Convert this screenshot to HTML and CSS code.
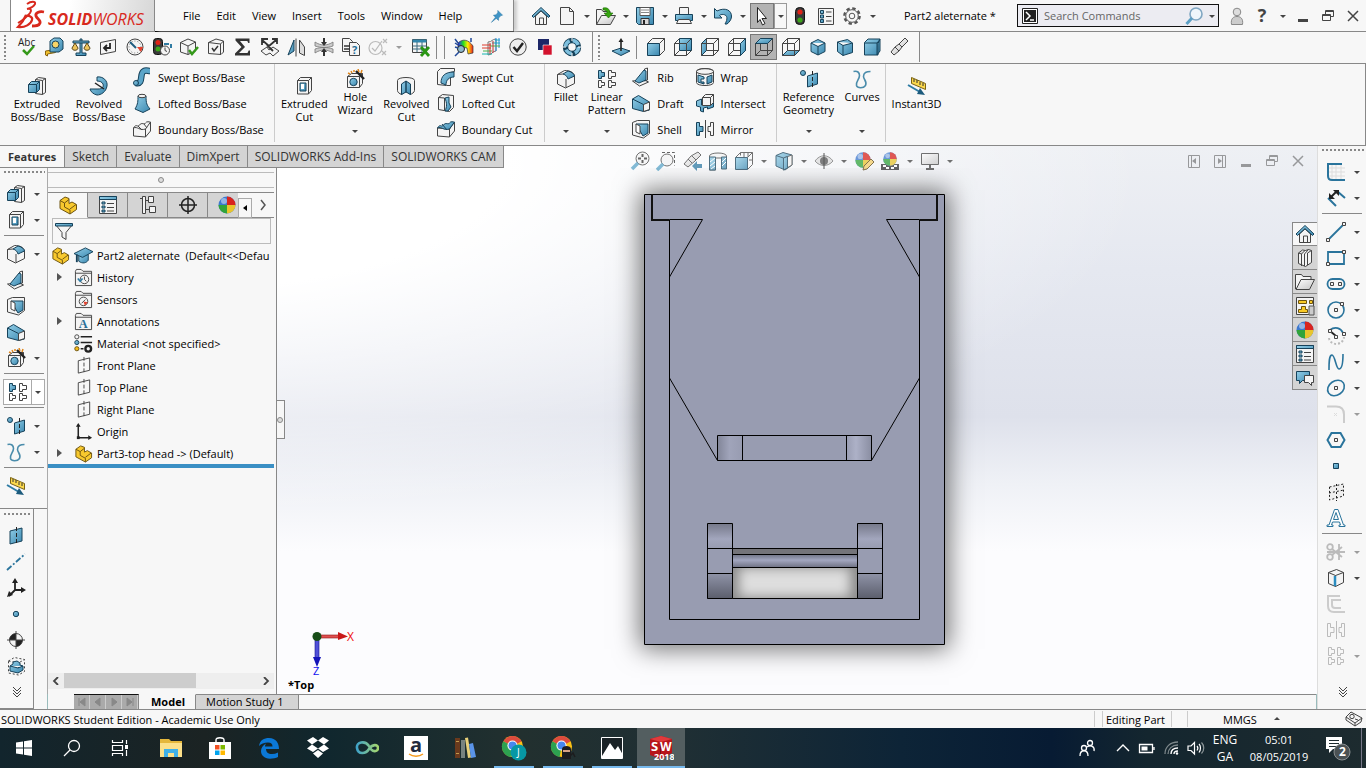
FILE: index.html
```html
<!DOCTYPE html>
<html lang="en">
<head>
    <meta charset="UTF-8">
    <meta name="viewport" content="width=device-width, initial-scale=1.0">
    <title>Part2 aleternate</title>
    <link rel="stylesheet" href="styles.css">
</head>
<body>
    <!-- icon sprite -->
    <svg class="sprite" aria-hidden="true">
        <defs>
            <linearGradient id="gBlue" x1="0" y1="0" x2="1" y2="1"><stop offset="0" stop-color="#93cfe8"/><stop offset="1" stop-color="#3a87af"/></linearGradient>
            <linearGradient id="gGrey" x1="0" y1="0" x2="1" y2="1"><stop offset="0" stop-color="#fff"/><stop offset="1" stop-color="#c4c4c4"/></linearGradient>
            <linearGradient id="gLoop" x1="0" y1="0" x2="1" y2="0"><stop offset="0" stop-color="#3fa3c8"/><stop offset="1" stop-color="#a5d66f"/></linearGradient>
            <linearGradient id="gRain" x1="0" y1="0" x2="1" y2="0"><stop offset="0" stop-color="#22f"/><stop offset=".35" stop-color="#2d2"/><stop offset=".65" stop-color="#fe0"/><stop offset="1" stop-color="#e22"/></linearGradient>
        </defs>
        <symbol id="drop" viewBox="0 0 8 8"><path d="M1 3h6L4 6z" fill="#444"/></symbol>
        <symbol id="more" viewBox="0 0 20 20"><path class="k" d="M6 5l4 4 4-4M6 8l4 4 4-4M6 11l4 4 4-4"/></symbol>
        <symbol id="home" viewBox="0 0 20 20"><path class="w" d="M4.5 10v8.500h11V10L10 5z"/><path class="k" d="M8.500 18v-6h4v6"/><path class="b" d="M1 10l9-8.500L19 10l-1.500 1.500L10 4.500 2.500 11.500z"/></symbol>
        <symbol id="new" viewBox="0 0 20 20"><path class="w" d="M3.500 1.500h9l4 4v13h-13z"/><path class="k" d="M12.500 1.500v4h4"/></symbol>
        <symbol id="open" viewBox="0 0 20 20"><path class="w" d="M.5 18.500v-15h5l1.500 2h7v4"/><path fill="url(#gGrey)" stroke="#444" d="M.5 18.500l5-9h14l-5 9z"/><path d="M7 2c4-1 7 1 7 5h3l-4.500 5L8 7h3c0-2-1-3-4-3z" fill="#36a50f" stroke="#1d6a05" stroke-width=".6"/></symbol>
        <symbol id="save" viewBox="0 0 20 20"><path class="b" d="M1.500 1.500h17v17h-15l-2-2z"/><path fill="#fff" stroke="#555" d="M5 1.500h10v8H5z"/><path d="M6 4h8M6 6.500h8" stroke="#888"/><path fill="#d8d8d8" stroke="#333" d="M6 12.500h8v6H6z"/><path fill="#222" d="M8 14h2v4H8z"/></symbol>
        <symbol id="print" viewBox="0 0 20 20"><path class="w" d="M5.500 1.500h9v7h-9z"/><path class="b" d="M1.500 8.500h17v6h-17z"/><path class="w" d="M4.500 13.500h11l2 4h-15z"/></symbol>
        <symbol id="undo" viewBox="0 0 20 20"><path class="b" d="M1.500 2.500l2.500 2.500c8-4 15-1 14.500 6-.5 3-2 5-4.500 7h-2c3-5 2.500-9-1.500-9.500-2-.2-3 .2-4 1l2.500 2.500h-7.500z"/></symbol>
        <symbol id="cursor" viewBox="0 0 20 20"><path fill="#fff" stroke="#222" d="M5.500 1.500l9 11h-4.500l3 5-2.500 1.500-2.500-5.500-2.500 3z"/></symbol>
        <symbol id="traffic" viewBox="0 0 20 20"><rect x="5.500" y="1.500" width="9" height="17" rx="4" fill="#3a3a3a" stroke="#111"/><circle cx="10" cy="6" r="2.600" fill="#e02418"/><circle cx="10" cy="14" r="2.600" fill="#3da51b"/></symbol>
        <symbol id="list" viewBox="0 0 20 20"><path class="w" d="M2.500 2.500h15v16h-15z"/><path class="b" d="M4.500 4.500h3v3h-3zM4.500 9h3v3h-3zM4.500 13.500h3v3h-3z"/><path class="k" d="M10 6h5.500M10 10.500h5.500M10 15h5.500"/></symbol>
        <symbol id="gear" viewBox="0 0 20 20"><circle cx="10" cy="10" r="7.600" fill="none" stroke="#555" stroke-width="2.400" stroke-dasharray="3.400 2.570"/><circle cx="10" cy="10" r="6.300" fill="#f7f7f7" stroke="#555"/><circle cx="10" cy="10" r="2.800" fill="none" stroke="#555"/></symbol>
        <symbol id="pin" viewBox="0 0 20 20"><path d="M11 3l6 6-2 .5-3 3v3l-3-2.500L3 18l5-6.500L5.500 9l3.500-.5 2-3z" fill="#3f94c6" stroke="#2673a3" stroke-width=".6"/></symbol>
        <symbol id="terminal" viewBox="0 0 20 20"><path fill="#fff" stroke="#222" d="M2.500 2.500h15v15h-15z"/><path fill="#222" d="M4 4h12v12H4z"/><path d="M6 6l4 4-4 4M10 14h4" fill="none" stroke="#fff" stroke-width="1.500"/></symbol>
        <symbol id="magnify" viewBox="0 0 20 20"><circle cx="12" cy="8" r="6" fill="#eef6fb" stroke="#7fa6c2" stroke-width="1.600"/><path d="M8 12l-5.500 6" stroke="#5b9fc4" stroke-width="3"/></symbol>
        <symbol id="user" viewBox="0 0 20 20"><circle cx="10" cy="6" r="3.800" fill="#ddd" stroke="#888"/><path d="M4.500 18.500c-1-6 2-8 5.500-8s6.500 2 5.500 8z" fill="#ccc" stroke="#888"/></symbol>
        <symbol id="min" viewBox="0 0 20 20"><path d="M5 13h10v3H5z" fill="#444"/></symbol>
        <symbol id="restore" viewBox="0 0 20 20"><path class="k" d="M7.500 8V4.500h8v6h-3M4.500 8.500h8v6h-8zM7 5.500h9M4 9.500h9"/></symbol>
        <symbol id="close" viewBox="0 0 20 20"><path d="M5 5l10 10M15 5L5 15" fill="none" stroke="#444" stroke-width="1.500"/></symbol>

        <symbol id="spell" viewBox="0 0 20 20"><path d="M6 13l4 4 7-8" fill="none" stroke="#35991a" stroke-width="2.500"/></symbol>
        <symbol id="tape" viewBox="0 0 20 20"><path fill="#f2c12e" stroke="#8a6410" d="M1.500 14l10-1.500v3l-8 1.500v2l-2-1z"/><path class="b" d="M6 4l4-3h6l3 3v8l-4 3H6z"/><circle cx="11.500" cy="7.500" r="3.500" fill="#f7d467" stroke="#17425a"/></symbol>
        <symbol id="scale" viewBox="0 0 20 20"><path class="b" d="M9 2h2v14h4v2.500H5V16h4z"/><path class="b" d="M2 4h16v2H2z"/><path d="M1 11l3-5 3 5c0 3-6 3-6 0zM13 11l3-5 3 5c0 3-6 3-6 0z" fill="#eec45c" stroke="#5b481b"/></symbol>
        <symbol id="section" viewBox="0 0 20 20"><path class="w" d="M2.500 5.500l15-3v12l-15 3z"/><path d="M12 6v5H7m2-3l-3 3 3 3" fill="none" stroke="#222" stroke-width="1.800"/></symbol>
        <symbol id="gauge" viewBox="0 0 20 20"><circle cx="10" cy="10" r="8" class="w"/><circle cx="10" cy="10" r="6" fill="none" stroke="#777" stroke-dasharray="1 2"/><path d="M12 10h6l-2 5z" fill="#e3422e"/><path d="M5 5l6 6" stroke="#1f5d80" stroke-width="2"/></symbol>
        <symbol id="trafficclock" viewBox="0 0 20 20"><rect x="1.500" y="1.500" width="9" height="16" rx="3" fill="#3a3a3a" stroke="#111"/><circle cx="6" cy="5.500" r="2.500" fill="#e02418"/><circle cx="6" cy="12" r="2.500" fill="#3da51b"/><circle cx="13" cy="13.500" r="4.500" class="w"/><path class="k" d="M13 10.500v3l2 1"/><path d="M12 7h5M19 7v4" fill="none" stroke="#2f7ba3" stroke-width="2"/></symbol>
        <symbol id="cubecheck" viewBox="0 0 20 20"><path class="w" d="M1.500 5.500L9 2l7.500 3v9L9 17.500 1.500 15zM1.500 5.500L9 9l7.500-4M9 9v8.500"/><path d="M10 13l3 4 6-7" fill="none" stroke="#35991a" stroke-width="2.500"/></symbol>
        <symbol id="cubetick" viewBox="0 0 20 20"><path class="w" d="M2.500 5.500L10 2l7.500 2v11L15 17.500l-12.500-1zM2.500 5.500l12 1.500 3-3M14.500 7v10"/><path d="M6 11l2 3 4-5" fill="none" stroke="#333" stroke-width="1.500"/></symbol>
        <symbol id="sigma" viewBox="0 0 20 20"><path d="M2.500 1.500h14v4.500h-1.200l-1-2H7l5 6-6 6h8.500l1.200-2.500h1.300v5h-15v-2l6.500-6.500-6-6.500z" fill="#333"/></symbol>
        <symbol id="mates" viewBox="0 0 20 20"><path class="w" d="M1 14l6-4 2 3 4-3 6 4-6 5-3-3-4 2z"/><path d="M2 3l7 6 7-6M12 2h5v5M2 8V2h6M7 8l6 6" fill="none" stroke="#333" stroke-width="1.800"/></symbol>
        <symbol id="mirrorview" viewBox="0 0 20 20"><path class="b" d="M1 18L7 3v11z"/><path d="M9 1.500v18M12.500 3v13l5 2.500V10z" fill="#ddd" stroke="#444"/></symbol>
        <symbol id="thickness" viewBox="0 0 20 20"><path d="M1 5c6 4 12 4 18 0v4c-6 2-12 2-18 0zM1 16c6-4 12-4 18 0v-4c-6-2-12-2-18 0z" fill="#ccc" stroke="#777" stroke-width=".8"/><path d="M10 1v6M10 19v-6" stroke="#333" stroke-width="2"/><path d="M7 5l3 4 3-4zM7 15l3-4 3 4z" fill="#333"/></symbol>
        <symbol id="compare" viewBox="0 0 20 20"><path class="w" d="M1.500 1.500h7l3 3v10h-10z"/><path class="w" d="M8.500 5.500h7l3 3v10h-10z"/><path d="M3 9h6m-6 3h6" stroke="#333" stroke-width="1.500"/></symbol>
        <symbol id="offcheck" viewBox="0 0 20 20"><g fill="none" stroke="#bbb" stroke-width="1.200"><circle cx="7.500" cy="11" r="6.500"/><path d="M4 11l3 3 7-10M15 2l4 4m0-4l-4 4m-1 8l4 4m0-4l-4 4"/></g></symbol>
        <symbol id="excel" viewBox="0 0 20 20"><path class="w" d="M1.500 2.500h14v13h-14z"/><path fill="#3186ad" d="M1.500 2.500h14v3h-14z"/><path d="M1.500 9h14M1.500 12h14M6 5v10M11 5v10" stroke="#3b6a80"/><path d="M10 10l8 9M18 10l-8 9" stroke="#2a9614" stroke-width="2.800"/></symbol>
        <symbol id="curvature" viewBox="0 0 20 20"><path d="M4 6c5-5 11-3 15 3v7l-5 1-1-6-5-1-4 2z" fill="url(#gRain)" stroke="#333" stroke-width=".7"/><circle cx="7" cy="12" r="3.500" fill="#8fb9cc" stroke="#222"/><path d="M5 15l-4 4M1 2l3 4M1 6l3 2M1 10l3 1M17 1v4" stroke="#224a9a" stroke-width="1.500"/></symbol>
        <symbol id="zebra" viewBox="0 0 20 20"><path d="M7 5c4 0 4-3 8-3v12c-4 0-4 4-8 4z" fill="#eee" stroke="#777"/><path d="M1 8h9M1 11h9" stroke="#dd3b2b"/><path d="M14 3h5M1 17h10M11 6h8" stroke="#12b5b0"/><path d="M18 1v10M15 1v13" stroke="#2a8de0"/><path d="M2 14h9M9 9h10" stroke="#4bb24b"/><path d="M12 4v12M9 6v11" stroke="#c33"/></symbol>
        <symbol id="roundcheck" viewBox="0 0 20 20"><circle cx="10" cy="10" r="8.200" fill="#eee" stroke="#444"/><path d="M5.500 10l3.500 4 6-8" fill="none" stroke="#222" stroke-width="2.400"/></symbol>
        <symbol id="overlap" viewBox="0 0 20 20"><path d="M3 2h11v11H3z" fill="#1d2667"/><path d="M8 8h9v10H8z" fill="#d3122d" stroke="#f7f7f7" stroke-width=".6"/></symbol>
        <symbol id="ring" viewBox="0 0 20 20"><circle cx="10" cy="10" r="6.500" fill="none" stroke="#17425a" stroke-width="5.500"/><circle cx="10" cy="10" r="6.500" fill="none" stroke="#7fc0de" stroke-width="3.500" stroke-dasharray="7 3.200"/><path d="M10 0v4M0 10h4M10 20v-4M20 10h-4" stroke="#fff"/></symbol>
        <symbol id="normal" viewBox="0 0 20 20"><path class="b" d="M1 14l9-3 9 3-9 4.500z"/><path d="M10 14V3" stroke="#222" stroke-width="1.600"/><path d="M7.500 5L10 1l2.500 4z" fill="#222"/></symbol>
        <symbol id="vfront" viewBox="0 0 20 20"><path class="w" d="M1.500 6.500l5-5h12v12l-5 5z"/><path class="b" d="M1.500 6.500h12v12h-12z"/><path class="k" d="M13.500 6.500l5-5"/></symbol>
        <symbol id="vback" viewBox="0 0 20 20"><path class="b" d="M6.500 1.500h12v12h-12z"/><path class="k" d="M1.500 6.500h12v12h-12zM1.500 6.500l5-5M13.500 6.500l5-5M13.500 18.500l5-5M1.500 18.500l5-5"/></symbol>
        <symbol id="vleft" viewBox="0 0 20 20"><path class="b" d="M1.500 6.500l5-5v12l-5 5z"/><path class="k" d="M1.500 6.500h12v12h-12zM6.500 1.500h12v12h-12zM13.500 6.500l5-5M13.500 18.500l5-5"/></symbol>
        <symbol id="vright" viewBox="0 0 20 20"><path class="k" d="M1.500 6.500h12v12h-12zM6.500 1.500h12v12h-12zM1.500 6.500l5-5M1.500 18.500l5-5"/><path class="b" d="M13.500 6.500l5-5v12l-5 5z"/></symbol>
        <symbol id="vtop" viewBox="0 0 20 20"><path class="k" d="M1.500 6.500h12v12h-12zM6.500 1.500h12v12h-12zM13.500 18.500l5-5M1.500 18.500l5-5"/><path class="b" d="M1.500 6.500l5-5h12l-5 5z"/></symbol>
        <symbol id="vbottom" viewBox="0 0 20 20"><path class="b" d="M1.500 18.500l5-5h12l-5 5z"/><path class="k" d="M1.500 6.500h12v12h-12zM6.500 1.500h12v12h-12zM1.500 6.500l5-5M13.500 6.500l5-5"/></symbol>
        <symbol id="viso" viewBox="0 0 20 20"><path class="b" d="M3 6l7-3.500L17 6v8.500L10 18l-7-3.500zM3 6l7 3.500L17 6M10 9.500V18"/></symbol>
        <symbol id="vtri" viewBox="0 0 20 20"><path class="b" d="M2.500 5l10-2.500L17.500 6v9.500L8 18.500l-5.500-4zM2.500 5L8 8.500 17.500 6M8 8.500v10"/></symbol>
        <symbol id="vdim" viewBox="0 0 20 20"><path class="b" d="M2.500 5.500L6 2h12l-2 4.500V18h-13.500zM2.500 6h12.500L18 2.500V14l-3 4V6"/></symbol>
        <symbol id="scope" viewBox="0 0 20 20"><path fill="url(#gGrey)" stroke="#444" d="M16 1l3 3-6 6-3 4-5 4-3-3 4-5 4-3z"/><path class="k" d="M6 10l4 4M10 7l3 3"/></symbol>

        <symbol id="extrude" viewBox="0 0 20 20"><path class="w" d="M8.500 3.500l3-2 7 1v14l-3 2-7-1zM15.500 4.500l3-2M15.500 4.500v14M8.500 3.500l7 1"/><path class="b" d="M1.500 8.500l3-3h8v8l-3 3h-8zM1.500 8.500h8v8M9.500 8.500l3-3"/></symbol>
        <symbol id="revolve" viewBox="0 0 20 20"><path class="b" d="M8 1c6-1 11 4 10 9-1 6-6 9-10 9-4-1-6-3-7-6h8c4 0 6-2 5-5-1-2-3-3-6-3z"/><path d="M6 7l9 6" stroke="#222" stroke-width="1.500"/></symbol>
        <symbol id="sweep" viewBox="0 0 20 20"><path d="M4 16c8 2 3-10 8-12 2-1 4 0 6 0" fill="none" stroke="#17425a" stroke-width="6.500"/><path d="M4 16c8 2 3-10 8-12 2-1 4 0 6 0" fill="none" stroke="#5ba5c9" stroke-width="4.500"/><circle cx="4" cy="16" r="2.500" class="b"/></symbol>
        <symbol id="loft" viewBox="0 0 20 20"><path class="b" d="M6 3h8c0 8 1 9 4 13l-7 3.500L3 16c3-5 3-8 3-13z"/><ellipse cx="10" cy="3" rx="4" ry="1.700" class="w"/></symbol>
        <symbol id="boundary" viewBox="0 0 20 20"><path class="w" d="M1.500 9c3-5 4 0 6-3s5 0 6-2 4-1 5-1v9l-5 6-12-1z"/><path class="k" d="M1.500 9c4-2 6 3 12 1l5-7M6 7l4 4M12 5l3 4M13.500 10v8"/></symbol>
        <symbol id="bcut" viewBox="0 0 20 20"><path class="w" d="M1.500 9l12 1 5-7v9l-5 6-12-1z"/><path class="b" d="M1.500 9c3-5 4 0 6-3s5 0 6-2 4-1 5-1l-5 7c-6 2-8-3-12-1zM6 5l5 6"/><path class="k" d="M13.500 10v8"/></symbol>
        <symbol id="excut" viewBox="0 0 20 20"><path class="w" d="M3.500 4.500l3-3h11v13l-3 3.500h-11zM3.500 4.500h11V18M14.500 4.500l3-3"/><path class="b" d="M6 7h6v8H6z"/><path fill="#fff" d="M7 8h3v5H7z"/></symbol>
        <symbol id="wizard" viewBox="0 0 20 20"><path class="w" d="M2.500 7.500l4-3h11v10l-3 4h-12zM2.500 7.500h12v11M14.500 7.500l3-3"/><circle cx="8.500" cy="13" r="3.700" class="b"/><path d="M11 2l8 8" stroke="#222" stroke-width="2.400"/><path d="M6 2l1 2M9 1v2M13 0l1 3M3 4l2 1M17 1l-1 3" stroke="#e0861b" stroke-width="1.500"/></symbol>
        <symbol id="recut" viewBox="0 0 20 20"><path class="w" d="M1.500 4.500c0-4 17-4 17 0v10c0 2-3 3.500-4 4l-4.500-3-4.500 3c-2-1-4-2-4-4z"/><path class="b" d="M5.500 8L10 5v11l-4.500 2.500zM14.500 8L10 5v11l4.500 2.500z"/></symbol>
        <symbol id="swcut" viewBox="0 0 20 20"><path class="w" d="M1.500 4.500l3-3h14v3l-4 1v13h-4l-9-1z"/><path class="b" d="M5 16c0-7 4-11 13-11v5c-5 0-8 3-8 8z"/></symbol>
        <symbol id="locut" viewBox="0 0 20 20"><path class="w" d="M2.500 4.500l4-3 11 1v12l-4 4-11-2zM2.500 4.500l6 .5v12"/><path class="b" d="M9 5l4-1v6l2 4-3 4H9c2-4 2-8 0-13z"/></symbol>
        <symbol id="fillet" viewBox="0 0 20 20"><path class="w" d="M1.500 5.500l7-4c6 0 9 2 10 5v8l-9 4.500-8-4z"/><path class="b" d="M7 5l5-3c4 1 6 3 6.500 5L12 10c-1-3-2-4-5-5z"/><path class="k" d="M1.500 5.500L7 5M10 10v8.500"/></symbol>
        <symbol id="pattern" viewBox="0 0 20 20"><path class="b" d="M1.500 1.500h3v2h3v4h-3v2h-3z"/><path class="k" d="M11.500 1.500h3v2h4v4h-4v2h-3zM1.500 11.500h3v2h3v3h-3v2h-3zM11.500 11.500h3v2h4v3h-4v2h-3z"/></symbol>
        <symbol id="rib" viewBox="0 0 20 20"><path class="w" d="M13.500 2l3-1v12l-3 1zM1.500 14l12-1 4 2-9 4z"/><path class="b" d="M4 14L13 3l2 1v9l-7 3z"/></symbol>
        <symbol id="draft" viewBox="0 0 20 20"><path class="b" d="M1.500 6l6-3.500 11 6.500v8l-6 1.500-11-3z"/><path class="w" d="M12.500 11.500l6-2.500v7.500l-6 2z"/><path d="M1.500 6l11 5.500" stroke="#17425a"/></symbol>
        <symbol id="shell" viewBox="0 0 20 20"><path class="w" d="M1.500 3.500l5-2h12v13l-6 4.500-11-3z"/><path class="b" d="M5 5h12v9l-5 3z"/><path fill="#fff" stroke="#444" d="M5 5l4 2v8l-4-2z"/></symbol>
        <symbol id="wrap" viewBox="0 0 20 20"><path class="w" d="M1.500 4.500c0-4 17-4 17 0v11c0 4-17 4-17 0z"/><ellipse cx="10" cy="4.500" rx="8.500" ry="2.800" class="w"/><path class="b" d="M3 8l6 2v2H6v3h3v2l-6-2zM12 10l5-2v7l-5 2z"/></symbol>
        <symbol id="intersect" viewBox="0 0 20 20"><path class="b" d="M1.500 8l5-2v6l12-3v5l-6 2v-2l-4 1v4l-3-1v-4l-4-1z"/><path class="w" d="M7.500 4.500l3-3h8v8l-3 3h-8zM7.500 4.500h8v8M15.500 4.500l3-3"/></symbol>
        <symbol id="mirror" viewBox="0 0 20 20"><path class="b" d="M1.500 3.500h3v4h3.500v5H4.500v4h-3z"/><path class="k" d="M10.500 1v18M18.500 3.500h-3v4H13v5h2.500v4h3z"/></symbol>
        <symbol id="refgeo" viewBox="0 0 20 20"><circle cx="4" cy="4" r="2.500" class="b"/><path class="b" d="M8.500 7l10-3v11l-10 3z"/><path d="M13.500 2v17" stroke="#222" stroke-dasharray="4 2"/></symbol>
        <symbol id="curves" viewBox="0 0 20 20"><path d="M1.500 2.500c4-1 6 1 6 4 0 4-4 6-3 10 1 3 7 3 9 0 2-4-2-6-2-9 0-4 3-5 7-5" fill="none" stroke="#4a8cab" stroke-width="1.600"/></symbol>
        <symbol id="instant" viewBox="0 0 20 20"><path fill="#fbd84c" stroke="#7a6315" d="M4.500 1.500l14 6v6l-14-6z"/><path d="M7 3v3M10 4v3M13 6v3M16 7v3" stroke="#333"/><path d="M1 9l12 7" stroke="#2e7ba4" stroke-width="2"/><path d="M13 12l5 7-8-1z" fill="#1d5b7d"/></symbol>

        <symbol id="zoomfit" viewBox="0 0 20 20"><circle cx="12.500" cy="7.500" r="6.500" class="w"/><path d="M8 12l-6 6" stroke="#5ba5c9" stroke-width="3.500"/><path d="M12.500 3v3m0 3v3m-4.500-4.500h3m3 0h3" stroke="#333" stroke-width="2"/></symbol>
        <symbol id="zoomarea" viewBox="0 0 20 20"><path d="M6 1.500h12.500v13" fill="none" stroke="#333" stroke-dasharray="3 2"/><circle cx="11" cy="9" r="6" class="w"/><path d="M7 13l-6 6" stroke="#5ba5c9" stroke-width="3.500"/></symbol>
        <symbol id="prev" viewBox="0 0 20 20"><path fill="url(#gGrey)" stroke="#444" d="M16 1l3 3-6 6-7 6-4-3 7-8zM6 8l4 4M10 5l4 4"/><path d="M10 15l5-5v3h5v4h-5v3z" fill="#2f7ba3"/></symbol>
        <symbol id="sectionview" viewBox="0 0 20 20"><path class="w" d="M1.500 5c0-4 17-4 17 0v12h-4V7h-7v12h-6z"/><path class="b" d="M1.500 6h6v13h-6zM13.500 6h5v12h-5z"/><path d="M2 11l5-4M2 15l5-4M3 18l4-3M14 11l4-4M14 15l4-4" stroke="#fff"/></symbol>
        <symbol id="orient" viewBox="0 0 20 20"><path class="k" d="M6.500 1.500h12v12M6.500 4.500v-3M10 1v5M14 1v5M15 9h4M1.500 6.500l5-5M13.500 6.500l5-5M13.500 18.500l5-5"/><path class="b" d="M1.500 6.500h12v12h-12z"/></symbol>
        <symbol id="display" viewBox="0 0 20 20"><path class="b" d="M2 4.500l7-3 9 2.500v10l-7 5-9-4z"/><path class="w" d="M9.500 7l8.500-3v10l-8.500 5z"/><path class="b" d="M9.500 7l4-1.500v11.500l-4 2z"/><path d="M2 4.500L9.500 7" stroke="#17425a"/></symbol>
        <symbol id="eye" viewBox="0 0 20 20"><path d="M1 10c5-7 13-7 18 0-5 6-13 6-18 0z" fill="#ddd" stroke="#777"/><circle cx="10" cy="10" r="4" fill="#555"/><path d="M10 2v16" stroke="#222"/></symbol>
        <symbol id="ball" viewBox="0 0 20 20"><circle cx="10" cy="10" r="8.500" fill="#3d79cf"/><path d="M10 10V1.500a8.500 8.500 0 018.500 8.500z" fill="#d9241e"/><path d="M10 10h8.500A8.500 8.500 0 0110 18.500z" fill="#e9c52c"/><path d="M10 10v8.500A8.500 8.500 0 011.500 10z" fill="#31a43a"/><circle cx="7" cy="6" r="3" fill="#fff" opacity=".45"/></symbol>
        <symbol id="ballpen" viewBox="0 0 20 20"><use href="#ball" width="18" height="18"/><path d="M17 8l3 3-7 7-4 1 1-4z" fill="#f5cf69" stroke="#5c4716"/></symbol>
        <symbol id="ballscene" viewBox="0 0 20 20"><path d="M1 13h18v6H1z" fill="#333"/><path d="M3 14h3v2H3zM14 14h3v2h-3zM6 16h3v2H6zM11 16h3v2h-3z" fill="#fff"/><use href="#ball" x="2" width="16" height="16"/></symbol>
        <symbol id="monitor" viewBox="0 0 20 20"><path fill="url(#gGrey)" stroke="#444" d="M1.500 2.500h17v11h-17z"/><path d="M9 14h2v3h3v2H6v-2h3z" fill="#444"/></symbol>
        <symbol id="dockl" viewBox="0 0 20 20"><path class="k" d="M4.500 4.500h11v12h-11zM7.500 4v12"/><path d="M12 7v6l-4-3z" fill="#444"/></symbol>
        <symbol id="dockr" viewBox="0 0 20 20"><path class="k" d="M4.500 4.500h11v12h-11zM12.500 4v12"/><path d="M8 7v6l4-3z" fill="#444"/></symbol>

        <symbol id="plane" viewBox="0 0 20 20"><path class="k" d="M4.500 5l12-3v13l-12 3z"/><path class="k" d="M10.500 1v18" stroke-dasharray="4 2"/></symbol>
        <symbol id="bplane" viewBox="0 0 20 20"><path class="b" d="M4 5l12-3v13L4 18z"/><path d="M10.500 1v18" stroke="#222" stroke-dasharray="4 2"/></symbol>
        <symbol id="axis" viewBox="0 0 20 20"><path d="M1 18L19 2" stroke="#2a749c" stroke-width="1.800" stroke-dasharray="6 2 2 2"/></symbol>
        <symbol id="csys" viewBox="0 0 20 20"><path d="M9 3v9h8M9 12l-6 6" fill="none" stroke="#222" stroke-width="1.800"/><path d="M6 5l3-5 3 5zM15 9l5 3-5 3zM1 19l2-6 4 4z" fill="#222"/></symbol>
        <symbol id="point" viewBox="0 0 20 20"><circle cx="10" cy="10" r="2.700" class="b"/></symbol>
        <symbol id="com" viewBox="0 0 20 20"><circle cx="10" cy="10" r="6.500" class="w"/><path d="M10 10V3.500A6.500 6.500 0 003.500 10zM10 10v6.500a6.500 6.500 0 006.500-6.500z" fill="#222"/><path class="k" d="M10 1v18M1 10h18"/></symbol>
        <symbol id="bbox" viewBox="0 0 20 20"><path class="k" stroke-dasharray="2 2" d="M2.500 5l6-3.500 10 2v12l-6 3.500-10-2zM2.500 5l10 2 6-3.500M12.500 7v12"/><path class="b" d="M4 10l3-2V6l4-1 3 2v2l3 1v4l-5 3-8-2zM4 10l8 2 5-2"/></symbol>
        <symbol id="part" viewBox="0 0 20 20"><path d="M2 5.500l5-3.500 4 1.500v5l3-1.500 4.500 2.500v5L12 19 2 13.500z" fill="#f8c92e" stroke="#6e5410"/><path d="M2 5.500L6.500 8v4l5.500 3M6.500 8L11 4.500M12 15v4M12 14l6-4.500" fill="none" stroke="#6e5410"/></symbol>
        <symbol id="cap" viewBox="0 0 20 20"><path class="b" d="M5 10v6c4 3 8 2 10-1V9z"/><path class="b" d="M0 8l12-6 8 4-11 6z"/><path d="M3 9v8" stroke="#17425a" stroke-width="2"/></symbol>
        <symbol id="folder" viewBox="0 0 20 20"><path class="w" d="M1.500 18.500V3.500l1-2h5l2 2h9v15zM1.500 5.500h17"/></symbol>
        <symbol id="history" viewBox="0 0 20 20"><use href="#folder" width="20" height="20"/><circle cx="11" cy="12" r="4.500" class="w"/><path class="k" d="M11 9v3l2 2"/><path d="M4 11l2.500 3L9 11" fill="none" stroke="#2f7ba3" stroke-width="1.700"/></symbol>
        <symbol id="sensor" viewBox="0 0 20 20"><use href="#folder" width="20" height="20"/><circle cx="10" cy="12" r="4.500" class="w"/><path d="M10 12l4.500 1-3 3.500z" fill="#e3422e"/><path class="k" d="M8 14l4-4"/></symbol>
        <symbol id="material" viewBox="0 0 20 20"><circle cx="3" cy="3" r="2.200" class="w"/><circle cx="3" cy="9" r="2.200" class="b"/><circle cx="3" cy="15.500" r="2.200" fill="#f3bb1c" stroke="#6e5410"/><path d="M7 3h12M7 9h12M7 15.500h3" stroke="#222" stroke-width="1.600"/><circle cx="15" cy="15.500" r="3" fill="none" stroke="#222" stroke-width="2.500"/></symbol>
        <symbol id="origin" viewBox="0 0 20 20"><path d="M4.500 3v13.500H17" fill="none" stroke="#222" stroke-width="1.600"/><path d="M2 5l2.500-4L7 5zM15 14l4 2.500-4 2.500z" fill="#222"/><path d="M3 15h3v3H3z" fill="#222"/></symbol>
        <symbol id="props" viewBox="0 0 20 20"><path class="w" d="M1.500 1.500h17v17h-17z"/><path class="b" d="M1.500 1.500h17v3h-17zM4 7h3v2H4zM4 11h3v2H4zM4 15h3v2H4z"/><path class="k" d="M9 8.500h7M9 12.500h7M9 16h7"/></symbol>
        <symbol id="config" viewBox="0 0 20 20"><path class="w" d="M4.500 1.500h3v17h-3zM10.500 1.500h5v6h-5zM11.500 11.500h6v6h-6z"/><path class="k" d="M7 5.500h3M7 14.500h4M2 3.500h3"/></symbol>
        <symbol id="target" viewBox="0 0 20 20"><circle cx="10" cy="10" r="6.500" fill="none" stroke="#222" stroke-width="1.500"/><path d="M10 1v18M1 10h18" stroke="#222" stroke-width="1.500"/></symbol>
        <symbol id="funnel" viewBox="0 0 20 20"><path class="w" d="M1.500 3.500h17l-6.500 8v7l-4-2.500v-4.500z"/><path class="b" d="M1.500 2.500h17v2.500h-17z"/></symbol>

        <symbol id="sketch" viewBox="0 0 20 20"><path d="M6 1v18M10 1v18M15 1v18M1 6h18M1 10h18M1 14h18" stroke="#ddd"/><path d="M16 2H2v12c0 3 1 4 4 4h13" fill="none" stroke="#2a749c" stroke-width="2"/></symbol>
        <symbol id="dimension" viewBox="0 0 20 20"><path d="M11 3l8 7M2 10l8 8" stroke="#2a749c" stroke-width="2"/><path d="M5 9l6-6" stroke="#222" stroke-width="2"/><path d="M7 2h6v6zM3 5v6h6z" fill="#222"/></symbol>
        <symbol id="line" viewBox="0 0 20 20"><path d="M3 17L17 3" stroke="#2a749c" stroke-width="1.800"/><path class="w" d="M.5 16.500h3v3h-3zM16.500.5h3v3h-3z"/></symbol>
        <symbol id="rect" viewBox="0 0 20 20"><path d="M2 4h16v12H2z" fill="none" stroke="#2a749c" stroke-width="1.800"/><path class="w" d="M.5 14.500h3v3h-3zM16.500 2.500h3v3h-3z"/></symbol>
        <symbol id="slot" viewBox="0 0 20 20"><rect x="1.500" y="5" width="17" height="10" rx="5" fill="none" stroke="#2a749c" stroke-width="1.800"/><path class="w" d="M4.500 8.500h3v3h-3zM12.500 8.500h3v3h-3z"/></symbol>
        <symbol id="circle" viewBox="0 0 20 20"><circle cx="10" cy="10" r="8" fill="none" stroke="#2a749c" stroke-width="1.600"/><path class="w" d="M8.500 8.500h3v3h-3zM14.500 2.500h3v3h-3z"/></symbol>
        <symbol id="arc" viewBox="0 0 20 20"><path d="M4 4c5-4 11-2 13 3" fill="none" stroke="#2a749c" stroke-width="1.800"/><path d="M3 12c1 8 14 8 15-1" fill="none" stroke="#bbb" stroke-width="2" stroke-dasharray="2 2"/><path d="M4 5l6 5" stroke="#222" stroke-width="1.800"/><path class="w" d="M2.500 3.500h3v3h-3zM8.500 9.500h3v3h-3zM16.500 6.500h3v3h-3z"/></symbol>
        <symbol id="spline" viewBox="0 0 20 20"><path d="M3 18c0-8 0-15 3-15s4 14 7 14 4-8 4-15" fill="none" stroke="#2a749c" stroke-width="1.600"/></symbol>
        <symbol id="ellipse" viewBox="0 0 20 20"><ellipse cx="10" cy="10" rx="9" ry="7" transform="rotate(-35 10 10)" fill="none" stroke="#2a749c" stroke-width="1.600"/><path class="w" d="M8.500 8.500h3v3h-3z"/></symbol>
        <symbol id="sfillet" viewBox="0 0 20 20"><path d="M1 2.500h9c5 0 8 3 8 8V19" fill="none" stroke="#ccc" stroke-width="2"/><path d="M8 9l3 3m0-3l-3 3" stroke="#ddd"/></symbol>
        <symbol id="polygon" viewBox="0 0 20 20"><path d="M5.500 3h9l4 7-4 7h-9l-4-7z" fill="none" stroke="#2a749c" stroke-width="2"/><path class="w" d="M8.500 8.500h3v3h-3z"/></symbol>
        <symbol id="spoint" viewBox="0 0 20 20"><path class="b" d="M7.500 7.500h5v5h-5z"/></symbol>
        <symbol id="splane" viewBox="0 0 20 20"><path fill="#eee" stroke="#222" stroke-dasharray="2 2" d="M3.500 5l14-3v12l-14 4zM3 11l15-3M10.500 2v17"/></symbol>
        <symbol id="stext" viewBox="0 0 20 20"><path d="M1 18.500h6v-1.500H5.500l1-3h7l1 3H13v1.500h6V17h-1.500L12 1.500H8.500L3 17H1zM7.500 11.500L10 4.500l2.500 7z" fill="#fff" stroke="#2a749c"/></symbol>
        <symbol id="trim" viewBox="0 0 20 20"><g fill="none" stroke="#bbb" stroke-width="1.800"><circle cx="4" cy="5" r="2.800"/><circle cx="4" cy="15" r="2.800"/><path d="M6 7l10 8M6 13l10-8M13 2v16M1 10h18"/></g></symbol>
        <symbol id="convert" viewBox="0 0 20 20"><path class="w" d="M2.500 4.500l8-3 7 3v10l-8 4-7-3zM2.500 4.500l7 3 8-3M9.500 7.500v11"/><path d="M9 8v10" stroke="#2a8cc0" stroke-width="2.500"/></symbol>
        <symbol id="offset" viewBox="0 0 20 20"><path d="M14 2H2v10c0 4 2 6 6 6h11M15 6H6v5c0 2 1 3 3 3h6" fill="none" stroke="#ccc" stroke-width="2"/></symbol>
        <symbol id="smirror" viewBox="0 0 20 20"><path d="M1.500 3.500h3v4H8v5H4.500v4h-3zM10.500 1v18M18.500 3.500h-3v4H13v5h2.500v4h3z" fill="none" stroke="#bbb"/></symbol>
        <symbol id="spattern" viewBox="0 0 20 20"><path d="M2.500 1.500h3v2h3v4h-3v2h-3zM11.500 1.500h3v2h3v4h-3v2h-3zM2.500 11.500h3v2h3v3h-3v2h-3zM11.500 11.500h3v2h3v3h-3v2h-3z" fill="none" stroke="#bbb"/></symbol>
        <symbol id="library" viewBox="0 0 20 20"><path class="w" d="M3.500 5l4-3 3 .5 3-1 3 1v12l-6 4-7-3zM6.500 6v12M9.500 6v12M12.500 5v12M3.500 5l3 1 3.500-3.500M9.500 6l4-4.500M12.500 5l4-2.500"/></symbol>
        <symbol id="dir" viewBox="0 0 20 20"><path class="w" d="M.5 17V2.500h6l1.500 2h8V8"/><path fill="url(#gGrey)" stroke="#444" d="M1 17.500L6 7.500h13.500l-5 10z"/></symbol>
        <symbol id="palette" viewBox="0 0 20 20"><path class="w" d="M1.500 1.500h17v17h-17z"/><path d="M3.500 4.500h8v3h-8zM14.500 4.500h3v3h-3zM6.500 10.500h4v3h2v3h-9v-3h3z" fill="#f9ca26" stroke="#6e5410"/><path d="M14 10h5v9h-5z" fill="#ccc" stroke="#555"/></symbol>
        <symbol id="forum" viewBox="0 0 20 20"><path class="b" d="M1.500 3.500h13v9h-7l-3 3v-3h-3z"/><path class="w" d="M9.500 7.500h9v7h-2v3l-3-3h-4z"/></symbol>

        <symbol id="windows" viewBox="0 0 20 20"><path fill="#fff" d="M2 4.500l7-1v6H2zM10 3.300L18 2v7.500h-8zM2 10.500h7v6l-7-1zM10 10.500h8V18l-8-1.200z"/></symbol>
        <symbol id="tsearch" viewBox="0 0 20 20"><circle cx="12" cy="8" r="5.500" fill="none" stroke="#fff" stroke-width="1.300"/><path d="M8 12l-6 6" stroke="#fff" stroke-width="1.300"/></symbol>
        <symbol id="taskview" viewBox="0 0 20 20"><path d="M2.500 2v2.500h10V2M2.500 18v-2.500h10V18M2.500 7.500h10v5h-10zM16.500 2v4M16.500 12v6" fill="none" stroke="#fff" stroke-width="1.200"/><path fill="#fff" d="M15 7h3v4h-3z"/></symbol>
        <symbol id="explorer" viewBox="0 0 24 24"><path fill="#e5b73c" d="M1 3h9l2 2h11v15H1z"/><path fill="#fce08a" d="M1 7h22v14H1z"/><path fill="#3fb0e8" d="M5 13h14v8h-4v-4H9v4H5z"/></symbol>
        <symbol id="store" viewBox="0 0 24 24"><path d="M8 7V4c0-3 8-3 8 0v3" fill="none" stroke="#fff" stroke-width="1.400"/><path fill="#fff" d="M1 6h22v17H1z"/><path fill="#f15022" d="M7 9h4.500v4.500H7z"/><path fill="#7fba00" d="M12.500 9H17v4.500h-4.500z"/><path fill="#00a4ef" d="M7 14.500h4.500V19H7z"/><path fill="#ffb900" d="M12.500 14.500H17V19h-4.500z"/></symbol>
        <symbol id="edge" viewBox="0 0 24 24"><path d="M2 10C3 4 7 2 12 2c7 0 10 5 10 11H9c0 3 2 5 6 5 2 0 4-.5 6-1.500V21c-2 1-5 1.700-8 1.700C7 22.700 4 19 4 15c0-3 2-6 5-7.500-.5.800-1 2-1 3h7.500C15.500 8 14 6.500 11 6.500 7 6.500 4 8 2 10z" fill="#0b78d7"/></symbol>
        <symbol id="dropbox" viewBox="0 0 24 24"><path fill="#fff" d="M7 1l5 3.500L6 8.500 1 4.500zM17 1l6 3.500-5 4-6-4zM1 12.500l5-4 6 4L7 16zM12 12.500l6-4 5 4L17 16zM12 14l5 3.500-5 4.500-5-4.500z"/></symbol>
        <symbol id="loop" viewBox="0 0 24 24"><path d="M14 10c-4-6-13-4-12 2 1 7 9 6 12 1 3-5 9-5 9-1s-6 5-9-2" fill="none" stroke="url(#gLoop)" stroke-width="2.600"/></symbol>
        <symbol id="amazon" viewBox="0 0 24 24"><path fill="#fff" d="M0 0h24v24H0z"/><path d="M5 18c4 3 10 3 14 0" fill="none" stroke="#f79a1b" stroke-width="1.500"/></symbol>
        <symbol id="books" viewBox="0 0 24 24"><path fill="#6b3a1d" d="M2 2h5v20H2z"/><path fill="#77827f" d="M8 4h4v18H8z"/><path fill="#e8d07a" d="M12 2l3-.5 3 20-3 .5z"/><path fill="#5a94e8" d="M16 8l4-1 3 14-5 1z"/><path fill="#c19a4c" d="M3 5h3v1H3zM3 17h3v1H3z"/></symbol>
        <symbol id="chrome" viewBox="0 0 24 24"><circle cx="12" cy="12" r="11" fill="#fbc116"/><path d="M12 12L2.500 6.500A11 11 0 0121.500 6.500z" fill="#dd4b3e"/><path d="M12 12l-2 11A11 11 0 012.500 6.500z" fill="#2da150"/><circle cx="12" cy="11" r="5.300" fill="#fff"/><circle cx="12" cy="11" r="4.200" fill="#4787ee"/></symbol>
        <symbol id="chromej" viewBox="0 0 26 26"><use href="#chrome" width="23" height="23"/><circle cx="17.500" cy="17.500" r="8" fill="#0797a4"/></symbol>
        <symbol id="chromen" viewBox="0 0 26 26"><use href="#chrome" width="23" height="23"/><path d="M12 14c0-4 9-4 9 0v10h-9z" fill="#1c1c1e"/><path fill="#d7a184" d="M13 15h7v2h-7z"/><path d="M20 21l3-3 2 4" fill="none" stroke="#1c1c1e" stroke-width="1.500"/></symbol>
        <symbol id="photos" viewBox="0 0 24 24"><path d="M1.500 1.500h21v21h-21z" fill="#1a2226" stroke="#fff"/><path fill="#fff" d="M2 20l8-13 5 7 3-4 5 9v3H2z"/></symbol>
        <symbol id="sw" viewBox="0 0 26 26"><path fill="#b7141b" d="M2 4l11-3 11 3v14l-11 6-11-4z"/><path fill="#e13a3c" d="M2 4l11-3 11 3-11 3z"/><path d="M12.500 7v17" stroke="#7d0a10"/></symbol>
        <symbol id="people" viewBox="0 0 20 20"><g fill="none" stroke="#fff" stroke-width="1.300"><circle cx="7" cy="10" r="2.500"/><path d="M3 18c0-7 8-7 8 0"/><circle cx="13" cy="5" r="2.500"/><path d="M10 9c4-3 8 0 7 4"/></g></symbol>
        <symbol id="up" viewBox="0 0 20 20"><path d="M4 13l6-6 6 6" fill="none" stroke="#fff" stroke-width="1.400"/></symbol>
        <symbol id="battery" viewBox="0 0 20 20"><path d="M2.500 6.500h13v8h-13zM17 9v3" fill="none" stroke="#fff" stroke-width="1.300"/><path fill="#fff" d="M4.500 8.500h6v4h-6z"/></symbol>
        <symbol id="wifi" viewBox="0 0 20 20"><g fill="none" stroke="#7d888b" stroke-width="1.300"><path d="M4 16C4 9 9 4 17 4"/><path d="M7 16c0-5 4-9 10-9"/></g><path d="M10 16c0-4 3-6 7-6M13 16c0-2 2-3 4-3" fill="none" stroke="#fff" stroke-width="1.400"/><circle cx="16" cy="15.500" r="1.200" fill="#fff"/></symbol>
        <symbol id="sound" viewBox="0 0 20 20"><path d="M3 8v4.500h3l3.500 3.500V4.500L6 8zM12 8c1 1 1 3 0 4.500M14 6c2 2 2 6 0 8.500" fill="none" stroke="#fff" stroke-width="1.200"/><path d="M16.500 4.500c3 3 3 8 0 11" fill="none" stroke="#8d9699" stroke-width="1.200"/></symbol>
        <symbol id="notes" viewBox="0 0 26 26"><path fill="#fff" d="M1 2h16v12H8l-4 4v-4H1z"/><path d="M4 5.500h10M4 8.500h10M4 11.500h10" stroke="#1d2b2f"/><circle cx="17" cy="17" r="8" fill="#4b5254" stroke="#8a9092"/></symbol>
        <symbol id="tag" viewBox="0 0 20 20"><path class="w" d="M2 8l5-5 11 6-1 4-6 4-9-6z"/><circle cx="8" cy="7.500" r="2.200" class="w"/><path class="k" d="M2 8l9 6 7-5M11 10l3 1M11 14v3"/></symbol>
        <symbol id="ds" viewBox="0 0 32 32"><g fill="none" stroke="#d8291d"><path d="M12 4c4-3 9-3 8 0-1 2-4 4-8 5 4-1 5 1 3 4-3 4-7 7-12 10" stroke-width="2"/><path d="M11 15c-2 5-5 9-8 12 7 1 13-3 14-7 1-3-3-5-7-4" stroke-width="2.200"/><path d="M29 12c-5-1-9 1-8 4 1 3 5 4 4 7-1 3-4 3-8 3" stroke-width="2.800"/></g></symbol>
    </svg>

    <header class="titlebar">
        <div class="brand">
            <svg class="brand-mark"><use href="#ds"/></svg>
            <span class="brand-name"><b>SOLID</b>WORKS</span>
        </div>
        <nav class="menu">
            <button>File</button>
            <button>Edit</button>
            <button>View</button>
            <button>Insert</button>
            <button>Tools</button>
            <button>Window</button>
            <button>Help</button>
            <button class="menu-pin" aria-label="Pin menu"><svg class="ico s16"><use href="#pin"/></svg></button>
        </nav>
        <div class="quick">
            <button class="tool start" aria-label="Home"><svg class="ico"><use href="#home"/></svg></button>
            <button class="tool" aria-label="New"><svg class="ico"><use href="#new"/></svg></button>
            <button class="drop" aria-label="New options"><svg><use href="#drop"/></svg></button>
            <button class="tool" aria-label="Open"><svg class="ico"><use href="#open"/></svg></button>
            <button class="drop" aria-label="Open options"><svg><use href="#drop"/></svg></button>
            <button class="tool" aria-label="Save"><svg class="ico"><use href="#save"/></svg></button>
            <button class="drop" aria-label="Save options"><svg><use href="#drop"/></svg></button>
            <button class="tool" aria-label="Print"><svg class="ico"><use href="#print"/></svg></button>
            <button class="drop" aria-label="Print options"><svg><use href="#drop"/></svg></button>
            <button class="tool" aria-label="Undo"><svg class="ico"><use href="#undo"/></svg></button>
            <button class="drop" aria-label="Undo options"><svg><use href="#drop"/></svg></button>
            <button class="tool pressed" aria-label="Select"><svg class="ico"><use href="#cursor"/></svg></button>
            <button class="drop boxed" aria-label="Select options"><svg><use href="#drop"/></svg></button>
            <button class="tool" aria-label="Rebuild"><svg class="ico"><use href="#traffic"/></svg></button>
            <button class="tool" aria-label="File properties"><svg class="ico"><use href="#list"/></svg></button>
            <button class="tool" aria-label="Options"><svg class="ico"><use href="#gear"/></svg></button>
            <button class="drop" aria-label="More options"><svg><use href="#drop"/></svg></button>
        </div>
        <div class="doc-name">Part2 aleternate *</div>
        <div class="search">
            <svg class="ico"><use href="#terminal"/></svg>
            <input type="text" placeholder="Search Commands" aria-label="Search Commands">
            <button class="tool" aria-label="Search"><svg class="ico"><use href="#magnify"/></svg></button>
            <button class="drop" aria-label="Search scope"><svg><use href="#drop"/></svg></button>
        </div>
        <div class="window-tools">
            <button class="tool" aria-label="Account"><svg class="ico"><use href="#user"/></svg></button>
            <button class="tool help" aria-label="Help">?</button>
            <button class="drop" aria-label="Help options"><svg><use href="#drop"/></svg></button>
            <button class="tool" aria-label="Minimize"><svg class="ico"><use href="#min"/></svg></button>
            <button class="tool" aria-label="Restore"><svg class="ico"><use href="#restore"/></svg></button>
            <button class="tool" aria-label="Close"><svg class="ico"><use href="#close"/></svg></button>
        </div>
    </header>

    <div class="toolbar">
        <span class="grip"></span>
        <button class="tool" aria-label="Spelling"><svg class="ico" viewBox="0 0 20 20"><use href="#spell"/><text x="1" y="9" font-size="10" fill="#222">Abc</text></svg></button>
        <button class="tool" aria-label="Measure"><svg class="ico"><use href="#tape"/></svg></button>
        <button class="tool" aria-label="Mass properties"><svg class="ico"><use href="#scale"/></svg></button>
        <button class="tool" aria-label="Section properties"><svg class="ico"><use href="#section"/></svg></button>
        <button class="tool" aria-label="Sensor"><svg class="ico"><use href="#gauge"/></svg></button>
        <button class="tool" aria-label="Performance"><svg class="ico"><use href="#trafficclock"/></svg></button>
        <button class="tool" aria-label="Check"><svg class="ico"><use href="#cubecheck"/></svg></button>
        <button class="tool" aria-label="Check entity"><svg class="ico"><use href="#cubetick"/></svg></button>
        <button class="tool" aria-label="Equations"><svg class="ico"><use href="#sigma"/></svg></button>
        <button class="tool" aria-label="Deviation"><svg class="ico"><use href="#mates"/></svg></button>
        <button class="tool" aria-label="Symmetry check"><svg class="ico"><use href="#mirrorview"/></svg></button>
        <button class="tool" aria-label="Thickness"><svg class="ico"><use href="#thickness"/></svg></button>
        <button class="tool" aria-label="Compare"><svg class="ico" viewBox="0 0 20 20"><use href="#compare"/><text x="11" y="17" font-size="11" font-weight="700" fill="#246c94">?</text></svg></button>
        <button class="tool" aria-label="Active document check" disabled><svg class="ico"><use href="#offcheck"/></svg></button>
        <button class="drop faded" aria-label="Check options"><svg><use href="#drop"/></svg></button>
        <button class="tool" aria-label="Design table"><svg class="ico"><use href="#excel"/></svg></button>
        <span class="bar-line double"></span>
        <button class="tool" aria-label="Curvature"><svg class="ico"><use href="#curvature"/></svg></button>
        <button class="tool" aria-label="Zebra stripes"><svg class="ico"><use href="#zebra"/></svg></button>
        <button class="tool" aria-label="Design checker"><svg class="ico"><use href="#roundcheck"/></svg></button>
        <button class="tool" aria-label="Compare documents"><svg class="ico"><use href="#overlap"/></svg></button>
        <button class="tool" aria-label="Sustainability"><svg class="ico"><use href="#ring"/></svg></button>
        <span class="bar-line"></span>
        <span class="grip"></span>
        <button class="tool" aria-label="Normal to"><svg class="ico"><use href="#normal"/></svg></button>
        <span class="bar-line short"></span>
        <button class="tool" aria-label="Front"><svg class="ico"><use href="#vfront"/></svg></button>
        <button class="tool" aria-label="Back"><svg class="ico"><use href="#vback"/></svg></button>
        <button class="tool" aria-label="Left"><svg class="ico"><use href="#vleft"/></svg></button>
        <button class="tool" aria-label="Right"><svg class="ico"><use href="#vright"/></svg></button>
        <button class="tool pressed" aria-label="Top"><svg class="ico"><use href="#vtop"/></svg></button>
        <button class="tool" aria-label="Bottom"><svg class="ico"><use href="#vbottom"/></svg></button>
        <button class="tool" aria-label="Isometric"><svg class="ico"><use href="#viso"/></svg></button>
        <button class="tool" aria-label="Trimetric"><svg class="ico"><use href="#vtri"/></svg></button>
        <button class="tool" aria-label="Dimetric"><svg class="ico"><use href="#vdim"/></svg></button>
        <button class="tool" aria-label="View orientation"><svg class="ico"><use href="#scope"/></svg></button>
        <span class="bar-line"></span>
    </div>

    <section class="ribbon">
        <div class="group">
            <button class="big low"><svg class="ico"><use href="#extrude"/></svg>Extruded<br>Boss/Base</button>
            <button class="big low"><svg class="ico"><use href="#revolve"/></svg>Revolved<br>Boss/Base</button>
            <div class="stack">
                <button><svg class="ico"><use href="#sweep"/></svg>Swept Boss/Base</button>
                <button><svg class="ico"><use href="#loft"/></svg>Lofted Boss/Base</button>
                <button><svg class="ico"><use href="#boundary"/></svg>Boundary Boss/Base</button>
            </div>
        </div>
        <div class="group cuts">
            <button class="big low narrow"><svg class="ico"><use href="#excut"/></svg>Extruded<br>Cut</button>
            <button class="big narrow"><svg class="ico"><use href="#wizard"/></svg>Hole<br>Wizard<svg class="big-drop"><use href="#drop"/></svg></button>
            <button class="big low narrow"><svg class="ico"><use href="#recut"/></svg>Revolved<br>Cut</button>
            <div class="stack">
                <button><svg class="ico"><use href="#swcut"/></svg>Swept Cut</button>
                <button><svg class="ico"><use href="#locut"/></svg>Lofted Cut</button>
                <button><svg class="ico"><use href="#bcut"/></svg>Boundary Cut</button>
            </div>
        </div>
        <div class="group shapes">
            <button class="big slim"><svg class="ico"><use href="#fillet"/></svg>Fillet<svg class="big-drop"><use href="#drop"/></svg></button>
            <button class="big slim"><svg class="ico"><use href="#pattern"/></svg>Linear<br>Pattern<svg class="big-drop"><use href="#drop"/></svg></button>
            <div class="stack">
                <button><svg class="ico"><use href="#rib"/></svg>Rib</button>
                <button><svg class="ico"><use href="#draft"/></svg>Draft</button>
                <button><svg class="ico"><use href="#shell"/></svg>Shell</button>
            </div>
            <div class="stack">
                <button><svg class="ico"><use href="#wrap"/></svg>Wrap</button>
                <button><svg class="ico"><use href="#intersect"/></svg>Intersect</button>
                <button><svg class="ico"><use href="#mirror"/></svg>Mirror</button>
            </div>
        </div>
        <div class="group geometry">
            <button class="big"><svg class="ico"><use href="#refgeo"/></svg>Reference<br>Geometry<svg class="big-drop"><use href="#drop"/></svg></button>
            <button class="big slim"><svg class="ico"><use href="#curves"/></svg>Curves<svg class="big-drop"><use href="#drop"/></svg></button>
        </div>
        <div class="group last">
            <button class="big low"><svg class="ico"><use href="#instant"/></svg>Instant3D</button>
        </div>
    </section>

    <main class="workspace">
        <div class="center">
            <div class="top-row">
                <nav class="tabs">
                    <button class="tab active">Features</button>
                    <button class="tab">Sketch</button>
                    <button class="tab">Evaluate</button>
                    <button class="tab">DimXpert</button>
                    <button class="tab">SOLIDWORKS Add-Ins</button>
                    <button class="tab">SOLIDWORKS CAM</button>
                </nav>
                <div class="heads-up">
                    <button class="tool" aria-label="Zoom to fit"><svg class="ico"><use href="#zoomfit"/></svg></button>
                    <button class="tool" aria-label="Zoom to area"><svg class="ico"><use href="#zoomarea"/></svg></button>
                    <button class="tool" aria-label="Previous view"><svg class="ico"><use href="#prev"/></svg></button>
                    <button class="tool" aria-label="Section view"><svg class="ico"><use href="#sectionview"/></svg></button>
                    <button class="tool" aria-label="View orientation"><svg class="ico"><use href="#orient"/></svg></button>
                    <button class="drop" aria-label="Orientation options"><svg><use href="#drop"/></svg></button>
                    <button class="tool" aria-label="Display style"><svg class="ico"><use href="#display"/></svg></button>
                    <button class="drop" aria-label="Display options"><svg><use href="#drop"/></svg></button>
                    <button class="tool" aria-label="Hide or show"><svg class="ico"><use href="#eye"/></svg></button>
                    <button class="drop" aria-label="Visibility options"><svg><use href="#drop"/></svg></button>
                    <button class="tool" aria-label="Edit appearance"><svg class="ico"><use href="#ballpen"/></svg></button>
                    <button class="tool" aria-label="Apply scene"><svg class="ico"><use href="#ballscene"/></svg></button>
                    <button class="drop" aria-label="Scene options"><svg><use href="#drop"/></svg></button>
                    <button class="tool" aria-label="View settings"><svg class="ico"><use href="#monitor"/></svg></button>
                    <button class="drop" aria-label="View setting options"><svg><use href="#drop"/></svg></button>
                </div>
                <div class="doc-buttons">
                    <button class="tool" aria-label="Dock left"><svg class="ico"><use href="#dockl"/></svg></button>
                    <button class="tool" aria-label="Dock right"><svg class="ico"><use href="#dockr"/></svg></button>
                    <button class="tool" aria-label="Minimize document"><svg class="ico"><use href="#min"/></svg></button>
                    <button class="tool" aria-label="Restore document"><svg class="ico"><use href="#restore"/></svg></button>
                    <button class="tool" aria-label="Close document"><svg class="ico"><use href="#close"/></svg></button>
                </div>
            </div>

            <div class="body-row">
                <aside class="left-tools">
                    <div class="vbar features-bar">
                        <span class="hgrip"></span>
                        <div class="row"><button class="tool" aria-label="Extruded boss"><svg class="ico"><use href="#extrude"/></svg></button><button class="drop" aria-label="Boss options"><svg><use href="#drop"/></svg></button></div>
                        <div class="row"><button class="tool" aria-label="Extruded cut"><svg class="ico"><use href="#excut"/></svg></button><button class="drop" aria-label="Cut options"><svg><use href="#drop"/></svg></button></div>
                        <hr>
                        <div class="row"><button class="tool" aria-label="Fillet"><svg class="ico"><use href="#fillet"/></svg></button><button class="drop" aria-label="Fillet options"><svg><use href="#drop"/></svg></button></div>
                        <div class="row"><button class="tool" aria-label="Rib"><svg class="ico"><use href="#rib"/></svg></button></div>
                        <div class="row"><button class="tool" aria-label="Shell"><svg class="ico"><use href="#shell"/></svg></button></div>
                        <div class="row"><button class="tool" aria-label="Draft"><svg class="ico"><use href="#draft"/></svg></button></div>
                        <div class="row"><button class="tool" aria-label="Hole wizard"><svg class="ico"><use href="#wizard"/></svg></button><button class="drop" aria-label="Hole options"><svg><use href="#drop"/></svg></button></div>
                        <hr>
                        <div class="row framed"><button class="tool" aria-label="Linear pattern"><svg class="ico"><use href="#pattern"/></svg></button><button class="drop" aria-label="Pattern options"><svg><use href="#drop"/></svg></button></div>
                        <hr>
                        <div class="row"><button class="tool" aria-label="Reference geometry"><svg class="ico"><use href="#refgeo"/></svg></button><button class="drop" aria-label="Geometry options"><svg><use href="#drop"/></svg></button></div>
                        <div class="row"><button class="tool" aria-label="Curves"><svg class="ico"><use href="#curves"/></svg></button><button class="drop" aria-label="Curve options"><svg><use href="#drop"/></svg></button></div>
                        <hr>
                        <div class="row"><button class="tool" aria-label="Instant3D"><svg class="ico"><use href="#instant"/></svg></button></div>
                    </div>
                    <div class="vbar ref-bar">
                        <span class="hgrip"></span>
                        <div class="row"><button class="tool" aria-label="Plane"><svg class="ico"><use href="#bplane"/></svg></button></div>
                        <div class="row"><button class="tool" aria-label="Axis"><svg class="ico"><use href="#axis"/></svg></button></div>
                        <div class="row"><button class="tool" aria-label="Coordinate system"><svg class="ico"><use href="#csys"/></svg></button></div>
                        <div class="row"><button class="tool" aria-label="Point"><svg class="ico"><use href="#point"/></svg></button></div>
                        <div class="row"><button class="tool" aria-label="Center of mass"><svg class="ico"><use href="#com"/></svg></button></div>
                        <div class="row"><button class="tool" aria-label="Bounding box"><svg class="ico"><use href="#bbox"/></svg></button></div>
                        <div class="row"><button class="tool" aria-label="More"><svg class="ico"><use href="#more"/></svg></button></div>
                    </div>
                </aside>

                <div class="document">
                    <div class="document-main">
                        <aside class="panel">
                            <div class="splitter"><span class="knob"></span></div>
                            <div class="panel-tabs">
                                <button class="ptab active" aria-label="Feature tree"><svg class="ico"><use href="#part"/></svg></button>
                                <button class="ptab" aria-label="Properties"><svg class="ico"><use href="#props"/></svg></button>
                                <button class="ptab" aria-label="Configurations"><svg class="ico"><use href="#config"/></svg></button>
                                <button class="ptab" aria-label="DimXpert"><svg class="ico"><use href="#target"/></svg></button>
                                <button class="ptab ball" aria-label="Display manager"><svg class="ico"><use href="#ball"/></svg></button>
                                <button class="pscroll" aria-label="Scroll tabs left"><svg viewBox="0 0 8 8"><path d="M6 1v6L2 4z"/></svg></button>
                                <button class="pnext" aria-label="More tabs"><svg viewBox="0 0 8 12"><path d="M2 1l4 5-4 5" fill="none" stroke="#555" stroke-width="1.500"/></svg></button>
                            </div>
                            <label class="filter">
                                <svg class="ico"><use href="#funnel"/></svg>
                                <input type="text" aria-label="Filter tree">
                            </label>
                            <ul class="tree">
                                <li class="root"><svg class="ico"><use href="#part"/></svg><svg class="ico"><use href="#cap"/></svg><span>Part2 aleternate&nbsp; (Default&lt;&lt;Defau</span></li>
                                <li class="parent"><svg class="ico"><use href="#history"/></svg><span>History</span></li>
                                <li><svg class="ico"><use href="#sensor"/></svg><span>Sensors</span></li>
                                <li class="parent"><svg class="ico" viewBox="0 0 20 20"><use href="#folder"/><text class="serif" x="5" y="17" font-size="13" font-weight="700" fill="#286f97">A</text></svg><span>Annotations</span></li>
                                <li><svg class="ico"><use href="#material"/></svg><span>Material &lt;not specified&gt;</span></li>
                                <li><svg class="ico"><use href="#plane"/></svg><span>Front Plane</span></li>
                                <li><svg class="ico"><use href="#plane"/></svg><span>Top Plane</span></li>
                                <li><svg class="ico"><use href="#plane"/></svg><span>Right Plane</span></li>
                                <li><svg class="ico"><use href="#origin"/></svg><span>Origin</span></li>
                                <li class="parent"><svg class="ico"><use href="#part"/></svg><span>Part3-top head -&gt; (Default)</span></li>
                            </ul>
                            <div class="rollback"></div>
                            <div class="hscroll">
                                <button aria-label="Scroll left"><svg viewBox="0 0 8 8"><path d="M6 0L2 4l4 4" fill="none" stroke="#444" stroke-width="1.800"/></svg></button>
                                <div class="track"><div class="thumb"></div></div>
                                <button aria-label="Scroll right"><svg viewBox="0 0 8 8"><path d="M2 0l4 4-4 4" fill="none" stroke="#444" stroke-width="1.800"/></svg></button>
                            </div>
                        </aside>

                        <section class="viewport">
                            <span class="handle"><span class="knob"></span></span>
                            <svg class="model" viewBox="0 0 301 451">
                                <defs>
                                    <linearGradient id="cylL" x1="0" x2="1" y1="0" y2="0"><stop offset="0" stop-color="#808497"/><stop offset=".5" stop-color="#a0a4ba"/><stop offset="1" stop-color="#989cb1"/></linearGradient>
                                    <linearGradient id="cylR" x1="0" x2="1" y1="0" y2="0"><stop offset="0" stop-color="#989cb1"/><stop offset=".4" stop-color="#adb1c7"/><stop offset="1" stop-color="#8b8fa3"/></linearGradient>
                                    <linearGradient id="lugTop" x1="0" x2="0" y1="0" y2="1"><stop offset="0" stop-color="#777a8b"/><stop offset=".6" stop-color="#a2a6bd"/><stop offset="1" stop-color="#979bb0"/></linearGradient>
                                    <linearGradient id="lugLow" x1="0" x2="0" y1="0" y2="1"><stop offset="0" stop-color="#8e92a6"/><stop offset="1" stop-color="#5a5d6b"/></linearGradient>
                                    <linearGradient id="rod" x1="0" x2="0" y1="0" y2="1"><stop offset="0" stop-color="#74788a"/><stop offset=".4" stop-color="#a2a6bf"/><stop offset="1" stop-color="#6b6e7f"/></linearGradient>
                                    <filter id="soft" x="-20%" y="-40%" width="140%" height="180%"><feGaussianBlur stdDeviation="6"/></filter>
                                    <clipPath id="hole"><path d="M88 374h125v31H88z"/></clipPath>
                                </defs>
                                <path d="M.5.5h300v450H.5z" fill="#989cb1"/>
                                <g clip-path="url(#hole)"><path d="M88 374h125v31H88z" fill="#8b8b8b"/><path d="M95 374h111v29H95z" fill="#dedede" filter="url(#soft)"/></g>
                                <path d="M88 354h125v7H88z" fill="#747479"/>
                                <path d="M88 361h125v13H88z" fill="url(#rod)"/>
                                <path d="M73 242h25v25H73z" fill="url(#cylL)"/>
                                <path d="M202 242h25v25h-25z" fill="url(#cylR)"/>
                                <path d="M63 330h25v25H63zM213 330h25v25h-25z" fill="url(#lugTop)"/>
                                <path d="M63 380h25v25H63zM213 380h25v25h-25z" fill="url(#lugLow)"/>
                                <g class="edges">
                                    <path d="M.5.5h300v450H.5z"/>
                                    <path d="M25.500 25.500v400h250v-400"/>
                                    <path d="M25.500 25.500H58.500L25.500 83M275.500 25.500H242.500L275.500 83"/>
                                    <path d="M25.500 184L73.500 266.500M275.500 184L227.500 266.500"/>
                                    <path d="M73.500 241.500h154v25h-154zM98.500 241.500v25M202.500 241.500v25"/>
                                    <path d="M63.500 329.500h25v75h-25zM213.500 329.500h25v75h-25zM63.500 354.500h175M63.500 379.500h25M213.500 379.500h25M88.500 360.500h125M88.500 373.500h125M88.500 404.500h125"/>
                                </g>
                                <path class="thick" d="M8 0v26h17M293 0v26h-17"/>
                            </svg>
                            <div class="triad">
                                <svg viewBox="0 0 64 46">
                                    <path d="M29 5h24v3H29z" fill="#e05050" stroke="#8e1010" stroke-width=".6"/><path d="M50 2l10 4.500L50 10z" fill="#c81818"/>
                                    <path d="M27 9h4v20h-4z" fill="#5050d8" stroke="#101090" stroke-width=".6"/><path d="M25 27h8l-4 10z" fill="#1414b8"/>
                                    <circle cx="29" cy="6.500" r="4.500" fill="#174d17"/>
                                    <text x="59" y="11" font-size="12" fill="#f01010">X</text>
                                    <text x="25" y="45" font-size="11" fill="#1010f0">Z</text>
                                </svg>
                                <span>*Top</span>
                            </div>
                            <nav class="task-pane">
                                <button class="active" aria-label="Resources"><svg class="ico"><use href="#home"/></svg></button>
                                <button aria-label="Design library"><svg class="ico"><use href="#library"/></svg></button>
                                <button aria-label="File explorer"><svg class="ico"><use href="#dir"/></svg></button>
                                <button aria-label="View palette"><svg class="ico"><use href="#palette"/></svg></button>
                                <button aria-label="Appearances"><svg class="ico"><use href="#ball"/></svg></button>
                                <button aria-label="Custom properties"><svg class="ico"><use href="#props"/></svg></button>
                                <button aria-label="Forum"><svg class="ico"><use href="#forum"/></svg></button>
                            </nav>
                        </section>
                    </div>
                    <div class="sheet-tabs">
                        <div class="sheet-nav">
                            <button aria-label="First"><svg viewBox="0 0 14 14"><path d="M4 3v8M10 3v8L5 7z"/></svg></button>
                            <button aria-label="Previous"><svg viewBox="0 0 14 14"><path d="M9 3v8L4 7z"/></svg></button>
                            <button aria-label="Next"><svg viewBox="0 0 14 14"><path d="M5 3v8l5-4z"/></svg></button>
                            <button aria-label="Last"><svg viewBox="0 0 14 14"><path d="M10 3v8M4 3v8l5-4z"/></svg></button>
                        </div>
                        <button class="sheet active">Model</button>
                        <button class="sheet">Motion Study 1</button>
                        <span class="sheet-rest"></span>
                    </div>
                </div>
            </div>
        </div>

        <aside class="vbar sketch-bar">
            <span class="hgrip"></span>
            <div class="row"><button class="tool" aria-label="Sketch"><svg class="ico"><use href="#sketch"/></svg></button><button class="drop" aria-label="Sketch options"><svg><use href="#drop"/></svg></button></div>
            <div class="row"><button class="tool" aria-label="Smart dimension"><svg class="ico"><use href="#dimension"/></svg></button><button class="drop" aria-label="Dimension options"><svg><use href="#drop"/></svg></button></div>
            <hr>
            <div class="row"><button class="tool" aria-label="Line"><svg class="ico"><use href="#line"/></svg></button><button class="drop" aria-label="Line options"><svg><use href="#drop"/></svg></button></div>
            <div class="row"><button class="tool" aria-label="Rectangle"><svg class="ico"><use href="#rect"/></svg></button><button class="drop" aria-label="Rectangle options"><svg><use href="#drop"/></svg></button></div>
            <div class="row"><button class="tool" aria-label="Slot"><svg class="ico"><use href="#slot"/></svg></button><button class="drop" aria-label="Slot options"><svg><use href="#drop"/></svg></button></div>
            <div class="row"><button class="tool" aria-label="Circle"><svg class="ico"><use href="#circle"/></svg></button><button class="drop" aria-label="Circle options"><svg><use href="#drop"/></svg></button></div>
            <div class="row"><button class="tool" aria-label="Arc"><svg class="ico"><use href="#arc"/></svg></button><button class="drop" aria-label="Arc options"><svg><use href="#drop"/></svg></button></div>
            <div class="row"><button class="tool" aria-label="Spline"><svg class="ico"><use href="#spline"/></svg></button><button class="drop" aria-label="Spline options"><svg><use href="#drop"/></svg></button></div>
            <div class="row"><button class="tool" aria-label="Ellipse"><svg class="ico"><use href="#ellipse"/></svg></button><button class="drop" aria-label="Ellipse options"><svg><use href="#drop"/></svg></button></div>
            <div class="row"><button class="tool" aria-label="Sketch fillet" disabled><svg class="ico"><use href="#sfillet"/></svg></button><button class="drop faded" aria-label="Sketch fillet options"><svg><use href="#drop"/></svg></button></div>
            <div class="row"><button class="tool" aria-label="Polygon"><svg class="ico"><use href="#polygon"/></svg></button></div>
            <div class="row"><button class="tool" aria-label="Sketch point"><svg class="ico"><use href="#spoint"/></svg></button></div>
            <div class="row"><button class="tool" aria-label="Sketch plane"><svg class="ico"><use href="#splane"/></svg></button></div>
            <div class="row"><button class="tool" aria-label="Text"><svg class="ico"><use href="#stext"/></svg></button></div>
            <hr>
            <div class="row"><button class="tool" aria-label="Trim" disabled><svg class="ico"><use href="#trim"/></svg></button><button class="drop faded" aria-label="Trim options"><svg><use href="#drop"/></svg></button></div>
            <div class="row"><button class="tool" aria-label="Convert entities"><svg class="ico"><use href="#convert"/></svg></button><button class="drop" aria-label="Convert options"><svg><use href="#drop"/></svg></button></div>
            <div class="row"><button class="tool" aria-label="Offset entities" disabled><svg class="ico"><use href="#offset"/></svg></button></div>
            <div class="row"><button class="tool" aria-label="Mirror entities" disabled><svg class="ico"><use href="#smirror"/></svg></button></div>
            <div class="row"><button class="tool" aria-label="Sketch pattern" disabled><svg class="ico"><use href="#spattern"/></svg></button><button class="drop faded" aria-label="Sketch pattern options"><svg><use href="#drop"/></svg></button></div>
            <div class="row more"><button class="tool" aria-label="More"><svg class="ico"><use href="#more"/></svg></button></div>
        </aside>
    </main>

    <footer class="statusbar">
        <span class="status-main">SOLIDWORKS Student Edition - Academic Use Only</span>
        <span class="status-gap"></span>
        <span class="status-cell">Editing Part</span>
        <span class="status-gap wide"></span>
        <button class="status-units">MMGS <svg><use href="#drop"/></svg></button>
        <button class="tool" aria-label="Tags"><svg class="ico"><use href="#tag"/></svg></button>
    </footer>

    <footer class="taskbar">
        <button class="task" aria-label="Start"><svg class="ico"><use href="#windows"/></svg></button>
        <button class="task" aria-label="Search"><svg class="ico"><use href="#tsearch"/></svg></button>
        <button class="task" aria-label="Task view"><svg class="ico"><use href="#taskview"/></svg></button>
        <div class="apps">
            <button class="task" aria-label="File Explorer"><svg class="ico s24"><use href="#explorer"/></svg></button>
            <button class="task" aria-label="Store"><svg class="ico s24"><use href="#store"/></svg></button>
            <button class="task" aria-label="Edge"><svg class="ico s24"><use href="#edge"/></svg></button>
            <button class="task" aria-label="Dropbox"><svg class="ico s24"><use href="#dropbox"/></svg></button>
            <button class="task" aria-label="Loop"><svg class="ico s24"><use href="#loop"/></svg></button>
            <button class="task" aria-label="Amazon"><svg class="ico s24" viewBox="0 0 24 24"><use href="#amazon"/><text x="6" y="16" font-size="20" font-weight="700" fill="#222a3d">a</text></svg></button>
            <button class="task" aria-label="Books"><svg class="ico s24"><use href="#books"/></svg></button>
            <button class="task open" aria-label="Chrome J"><svg class="ico s26" viewBox="0 0 26 26"><use href="#chromej"/><text x="16" y="21" font-size="10" fill="#fff">J</text></svg></button>
            <button class="task open" aria-label="Chrome"><svg class="ico s26"><use href="#chromen"/></svg></button>
            <button class="task open" aria-label="Photos"><svg class="ico s24"><use href="#photos"/></svg></button>
            <button class="task open current" aria-label="SOLIDWORKS 2018"><svg class="ico s26" viewBox="0 0 26 26"><use href="#sw"/><text x="3" y="16" font-size="13" font-weight="700" fill="#fff">S</text><text x="12" y="16" font-size="12" font-weight="700" fill="#fff">W</text><text x="6" y="25" font-size="9" font-weight="700" fill="#fff">2018</text></svg></button>
        </div>
        <div class="tray">
            <button class="tray-people" aria-label="People"><svg class="ico"><use href="#people"/></svg></button>
            <button aria-label="Hidden icons"><svg class="ico"><use href="#up"/></svg></button>
            <button aria-label="Battery"><svg class="ico"><use href="#battery"/></svg></button>
            <button aria-label="Network"><svg class="ico"><use href="#wifi"/></svg></button>
            <button aria-label="Volume"><svg class="ico"><use href="#sound"/></svg></button>
            <button class="lang">ENG<br>GA</button>
            <button class="clock">05:01<br>08/05/2019</button>
            <button class="notes" aria-label="Notifications"><svg class="ico s26" viewBox="0 0 26 26"><use href="#notes"/><text x="14" y="21" font-size="12" font-weight="700" fill="#fff">2</text></svg></button>
        </div>
    </footer>
</body>
</html>
```
FILE: styles.css
```css
* {
    box-sizing: border-box;
}
body {
    margin: 0;
    height: 100vh;
    display: flex;
    flex-direction: column;
    overflow: hidden;
    background: #f7f7f7;
    color: #000;
    font-family: "Open Sans", "Noto Sans", sans-serif;
    font-size: 11px;
    line-height: 13px;
}
button {
    display: flex;
    align-items: center;
    justify-content: center;
    margin: 0;
    padding: 0;
    border: none;
    background: none;
    color: inherit;
    font: inherit;
    white-space: nowrap;
}
input {
    min-width: 0;
    border: none;
    outline: none;
    background: none;
    font: inherit;
}
.sprite {
    position: absolute;
    width: 0;
    height: 0;
}
.ico {
    flex: none;
    width: 20px;
    height: 20px;
}
.s16 {
    width: 16px;
    height: 16px;
}
.s24 {
    width: 24px;
    height: 24px;
}
.s26 {
    width: 26px;
    height: 26px;
}
.serif {
    font-family: "Liberation Serif", serif;
}

/* icon paints */
.b {
    fill: url(#gBlue);
    stroke: #17425a;
}
.w {
    fill: #f4f4f4;
    stroke: #444;
}
.k {
    fill: none;
    stroke: #444;
}

.tool {
    flex: none;
    width: 24px;
    height: 26px;
}
.drop {
    flex: none;
    width: 15px;
    height: 26px;
}
.drop svg {
    width: 8px;
    height: 8px;
}
.faded {
    opacity: 0.5;
}
.pressed {
    background: #b3b3b3;
    border: 1px solid #777;
}
.boxed {
    width: 13px;
    border: 1px solid #999;
}

/* title bar */
.titlebar {
    flex: none;
    height: 32px;
    display: flex;
    align-items: center;
    border-bottom: 1px solid #888;
}
.brand {
    display: flex;
    align-items: center;
    gap: 1px;
    width: 145px;
    height: 31px;
    margin-left: 10px;
    padding-left: 4px;
    background: linear-gradient(100deg, #fff 40%, #d6d6d6);
    border-left: 1px solid #888;
    border-right: 1px solid #888;
    overflow: hidden;
}
.brand-mark {
    flex: none;
    width: 32px;
    height: 32px;
}
.brand-name {
    color: #d8291d;
    font-size: 16px;
    font-style: italic;
    line-height: 20px;
    padding-top: 6px;
}
.menu {
    display: flex;
    align-items: center;
    align-self: stretch;
    gap: 16px;
    width: 359px;
    padding-left: 28px;
    border-right: 1px solid #888;
    box-shadow: 3px 0 3px #ccc, 0 1px 0 #000;
}
.menu-pin {
    margin-left: auto;
    margin-right: 8px;
}
.quick {
    display: flex;
    padding-left: 15px;
}
.quick .start {
    margin-right: 2px;
}
.quick .boxed ~ .tool {
    width: 26px;
}
.doc-name {
    flex: 1;
    padding-left: 24px;
    white-space: nowrap;
}
.search {
    display: flex;
    align-items: center;
    width: 202px;
    height: 23px;
    padding-left: 2px;
    border: 1px solid #111;
    background: #ececf2;
}
.search input {
    flex: 1;
    padding: 0 4px;
}
.search input::placeholder {
    color: #666;
}
.search .drop {
    width: 12px;
}
.window-tools {
    display: flex;
    gap: 1px;
    padding-left: 6px;
    padding-right: 1px;
}
.help {
    font-size: 18px;
    font-weight: 700;
    color: #444;
}

/* tool row */
.toolbar {
    flex: none;
    height: 32px;
    display: flex;
    align-items: center;
    padding-bottom: 1px;
    border-bottom: 1px solid #888;
}
.toolbar .tool {
    width: 27px;
}
.toolbar .drop {
    width: 16px;
}
.grip {
    width: 3px;
    height: 26px;
    margin: 0 7px 0 3px;
    background: radial-gradient(circle, #888 1px, transparent 1px) 0 0 / 4px 4px;
}
.bar-line {
    align-self: stretch;
    width: 1px;
    margin: 0 1px 0 7px;
    background: #888;
}
.double {
    width: 9px;
    margin: 4px 5px 3px 2px;
    background: none;
    border-left: 1px solid #888;
    border-right: 1px solid #888;
}
.short {
    margin: 4px 5px 3px 2px;
}

/* ribbon */
.ribbon {
    flex: none;
    height: 82px;
    display: flex;
    border-right: 1px solid #888;
    border-bottom: 1px solid #888;
}
.group {
    display: flex;
    margin-bottom: 3px;
    padding: 0 10px 0 6px;
    border-right: 1px solid #ccc;
}
.cuts {
    padding-left: 4px;
    padding-right: 12px;
}
.shapes {
    padding-left: 0;
}
.geometry {
    gap: 2px;
    padding: 0 2px 0 1px;
}
.last {
    padding: 0;
    border-right: none;
}
.big {
    display: flex;
    flex-direction: column;
    justify-content: flex-start;
    width: 62px;
    padding-top: 5px;
    text-align: center;
}
.big .ico {
    margin-bottom: 1px;
}
.low {
    padding-top: 12px;
}
.narrow {
    width: 51px;
}
.slim {
    width: 41px;
}
.big-drop {
    width: 8px;
    height: 8px;
    margin-top: auto;
    margin-bottom: 7px;
}
.stack {
    display: flex;
    flex-direction: column;
    padding-left: 2px;
}
.cuts .stack,
.shapes .stack {
    padding-left: 4px;
}
.shapes .stack + .stack {
    padding-left: 11px;
}
.stack button {
    justify-content: flex-start;
    gap: 6px;
    height: 26px;
}

/* workspace */
.workspace {
    flex: 1;
    min-height: 0;
    display: flex;
}
.center {
    flex: 1;
    min-width: 0;
    display: flex;
    flex-direction: column;
    background:
        radial-gradient(ellipse 75% 62% at 12% 4%, #fff 35%, transparent),
        linear-gradient(#eef0f4, #e5e8f0 22%, #dee1eb 48%, #eff1f6 60%, #fcfcfe 72%);
}
.top-row {
    flex: none;
    height: 22px;
    display: flex;
}
.tabs {
    display: flex;
    font-size: 12px;
    color: #333;
}
.tab {
    padding: 0 7px;
    background: #d4d4d4;
    border-right: 1px solid #888;
    border-bottom: 1px solid #888;
}
.tab.active {
    padding: 0 8px;
    background: #f7f7f7;
    font-size: 11px;
    font-weight: 700;
}
.heads-up {
    display: flex;
    align-items: center;
    height: 30px;
    margin-left: auto;
    opacity: 0.75;
}
.heads-up .tool {
    width: 26px;
}
.heads-up .drop {
    width: 14px;
}
.doc-buttons {
    display: flex;
    align-items: center;
    height: 30px;
    margin-left: 17%;
    padding-right: 6px;
    opacity: 0.5;
}
.doc-buttons .tool {
    width: 26px;
}
.body-row {
    flex: 1;
    min-height: 0;
    display: flex;
}
.left-tools {
    flex: none;
    width: 47px;
    background: #f7f7f7;
}
.vbar hr {
    width: 40px;
    height: 1px;
    margin: 2px auto 5px;
    border: none;
    background: #888;
}
.vbar .row {
    display: flex;
    align-items: center;
    height: 26px;
    padding-left: 4px;
}
.vbar .drop {
    width: 17px;
}
.hgrip {
    display: block;
    height: 3px;
    margin: 2px 2px 8px 3px;
    background: radial-gradient(circle, #888 1px, transparent 1px) 0 0 / 4px 4px;
}
.features-bar {
    height: 339px;
    border-bottom: 1px solid #888;
}
.vbar .framed {
    margin: 0 2px 0 3px;
    padding-left: 1px;
    background: #fff;
    border: 1px solid #aaa;
}
.framed .tool {
    width: 26px;
}
.framed .drop {
    width: 13px;
    height: 24px;
    border-left: 1px solid #aaa;
}
.ref-bar {
    width: 34px;
    height: 200px;
    padding-top: 1px;
    border-right: 1px solid #888;
    border-bottom: 1px solid #888;
}
.ref-bar .row:last-child {
    padding-left: 5px;
}
.sketch-bar {
    width: 49px;
    background: #f7f7f7;
    border-left: 1px solid #ddd;
}
.sketch-bar .row {
    padding-left: 6px;
}
.sketch-bar .more {
    margin-top: 10px;
    padding-left: 13px;
}

.document {
    flex: 1;
    min-width: 0;
    display: flex;
    flex-direction: column;
}
.document-main {
    flex: 1;
    min-height: 0;
    display: flex;
}

/* feature tree panel */
.panel {
    flex: none;
    width: 230px;
    display: flex;
    flex-direction: column;
    padding: 0 2px 0 0;
    background: #f7f7f7;
    border-right: 1px solid #888;
    border-left: 1px solid #aaa;
}
.splitter {
    display: flex;
    align-items: center;
    justify-content: center;
    height: 16px;
    margin-top: 4px;
    border-top: 1px solid #bbb;
    border-bottom: 1px solid #bbb;
}
.knob {
    width: 6px;
    height: 6px;
    background: #ddd;
    border: 1px solid #888;
    border-radius: 50%;
}
.panel-tabs {
    flex: none;
    display: flex;
    height: 26px;
    margin-top: 4px;
    border-top: 1px solid #888;
}
.ptab {
    width: 40px;
    background: #d4d4d4;
    border-right: 1px solid #888;
    border-bottom: 1px solid #888;
}
.ptab.active {
    background: #f7f7f7;
    border-bottom-color: #f7f7f7;
}
.ptab.ball {
    width: 30px;
    padding-left: 8px;
    border-right: none;
}
.pscroll {
    align-self: flex-end;
    width: 14px;
    height: 20px;
    border: 1px solid #aaa;
}
.pscroll svg {
    width: 8px;
    height: 8px;
}
.pnext {
    flex: 1;
    border-bottom: 1px solid #888;
}
.pnext svg {
    width: 8px;
    height: 12px;
}
.filter {
    flex: none;
    display: flex;
    align-items: center;
    height: 26px;
    margin: 0 3px 0 4px;
    padding-left: 1px;
    border: 1px solid #bbb;
}
.filter input {
    flex: 1;
}
.tree {
    margin: 0;
    padding: 0;
    list-style: none;
}
.tree li {
    display: flex;
    align-items: center;
    gap: 4px;
    height: 22px;
    padding-left: 26px;
    white-space: nowrap;
}
.tree .root {
    padding-left: 3px;
}
.tree .parent {
    padding-left: 9px;
}
.tree .parent::before {
    content: "";
    width: 5px;
    height: 8px;
    margin-right: 8px;
    background: #555;
    clip-path: polygon(0 0, 100% 50%, 0 100%);
}
.tree .ico {
    width: 19px;
    height: 19px;
}
.rollback {
    flex: none;
    height: 4px;
    background: #3a8fc4;
}
.hscroll {
    flex: none;
    display: flex;
    height: 16px;
    margin-top: auto;
    margin-bottom: 5px;
    background: #eee;
}
.hscroll button {
    width: 16px;
}
.hscroll svg {
    width: 8px;
    height: 8px;
}
.track {
    flex: 1;
}
.thumb {
    width: 68%;
    height: 15px;
    background: #cdcdcd;
}

/* graphics area */
.viewport {
    position: relative;
    flex: 1;
    min-width: 0;
    display: flex;
    justify-content: center;
    align-items: flex-start;
    padding: 26px 5px 0 0;
    overflow: hidden;
}
.model {
    width: 301px;
    height: 451px;
    box-shadow: 0 0 24px 4px rgba(0, 0, 0, 0.55);
}
.edges {
    fill: none;
    stroke: #000;
}
.thick {
    fill: none;
    stroke: #111;
    stroke-width: 2;
}
.handle {
    position: absolute;
    left: 0;
    top: 232px;
    display: flex;
    align-items: center;
    width: 8px;
    height: 39px;
    background: #f7f7f7;
    border: 1px solid #888;
    border-left: none;
}
.triad {
    position: absolute;
    left: 11px;
    bottom: 3px;
    font-weight: 700;
}
.triad svg {
    display: block;
    width: 64px;
    height: 46px;
    margin-bottom: 2px;
    overflow: visible;
    font-weight: 400;
}
.task-pane {
    position: absolute;
    right: 0;
    top: 54px;
    border: 1px solid #888;
    border-right: none;
}
.task-pane button {
    width: 24px;
    height: 24px;
    background: #d4d4d4;
    border-bottom: 1px solid #888;
}
.task-pane button:last-child {
    height: 23px;
    border-bottom: none;
}
.task-pane .active {
    height: 23px;
    background: #f7f7f7;
}

/* sheet tabs */
.sheet-tabs {
    flex: none;
    display: flex;
    height: 15px;
    padding-left: 26px;
    background: #f7f7f7;
    border-left: 1px solid #9bb;
    border-right: 1px solid #9bb;
}
.sheet-nav {
    display: flex;
    border-top: 1px solid #111;
    border-right: 1px solid #888;
    background: #aaa;
}
.sheet-nav button {
    width: 16px;
    border-right: 1px solid #ccc;
}
.sheet-nav svg {
    width: 14px;
    height: 14px;
    fill: #888;
    stroke: #888;
}
.sheet {
    padding: 0 14px 2px 10px;
    background: #d4d4d4;
    border-top: 1px solid #888;
    border-right: 1px solid #888;
}
.sheet.active {
    padding: 0 10px 2px 12px;
    background: #f7f7f7;
    border-top-color: #f7f7f7;
    font-weight: 700;
}
.sheet-rest {
    flex: 1;
    border-top: 1px solid #888;
}

/* status bar */
.statusbar {
    flex: none;
    height: 19px;
    display: flex;
    align-items: center;
    border-top: 1px solid #888;
}
.status-main {
    flex: 1;
    padding-left: 1px;
}
.status-gap {
    width: 9px;
    height: 16px;
    border-left: 1px solid #ccc;
    border-right: 1px solid #ccc;
}
.status-gap.wide {
    width: 17px;
}
.status-cell {
    padding: 0 6px 0 3px;
}
.status-units {
    width: 124px;
    gap: 16px;
    padding-left: 4px;
}
.status-units svg {
    width: 8px;
    height: 8px;
    transform: rotate(180deg);
}
.statusbar .tool {
    margin-left: 30px;
    height: 18px;
}

/* taskbar */
.taskbar {
    flex: none;
    height: 40px;
    display: flex;
    background: linear-gradient(90deg, #12252d, #1b2323 15%, #10272e 24%, #22302f 38%, #1f2f34 50%, #0d2437 66%, #071b33 77%, #14262f 84%, #1d2b2f);
    color: #fff;
}
.task {
    width: 48px;
}
.apps {
    display: flex;
    gap: 1px;
    margin-left: 3px;
}
.open {
    background: linear-gradient(#76b9ed, #76b9ed) center bottom / 40px 2px no-repeat;
}
.current {
    background: linear-gradient(#76b9ed, #76b9ed) center bottom / 48px 2px no-repeat, #535e60;
}
.tray {
    display: flex;
    margin-left: auto;
    margin-right: 4px;
    border-right: 1px solid #778;
    line-height: 17px;
}
.tray button {
    width: 24px;
}
.tray .tray-people {
    margin-right: 12px;
}
.tray .lang {
    width: 36px;
    font-size: 12px;
}
.tray .clock {
    width: 72px;
}
.tray .notes {
    width: 46px;
}
```
